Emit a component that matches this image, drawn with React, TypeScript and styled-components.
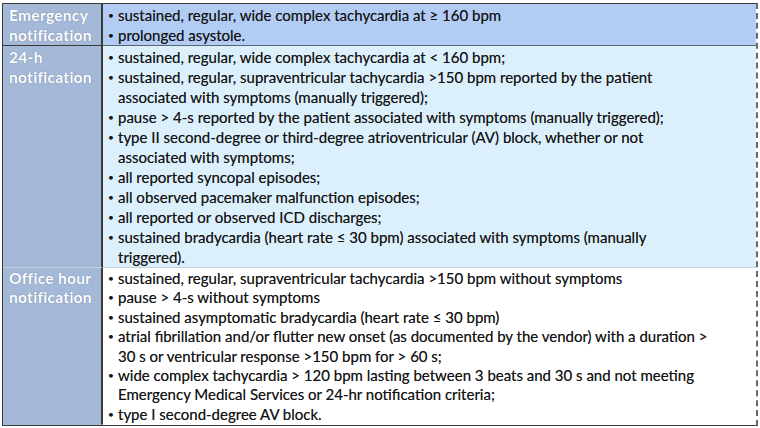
import React from "react";
import styled, { createGlobalStyle } from "styled-components";

const GlobalStyle = createGlobalStyle`
  html, body {
    margin: 0;
    padding: 0;
    background: #ffffff;
  }
  body {
    font-family: Lato, "Open Sans", "Liberation Sans", sans-serif;
    color: #141414;
  }
`;

const Page = styled.div`
  width: 760px;
  height: 428px;
  padding: 3px 2px 0 2px;
  box-sizing: border-box;
`;

const Table = styled.div`
  display: grid;
  grid-template-columns: 100px 1fr;
  border-top: 1px solid #3c3c3c;
  border-left: 1px solid #3c3c3c;
  border-right: 2px dashed #6a6a6a;
  border-bottom: 1px solid #3c3c3c;
`;

type Tone = "emergency" | "daily" | "office";

const bodyBg: Record<Tone, string> = {
  emergency: "#b2ccf4",
  daily: "#dcf0fc",
  office: "#ffffff",
};

const HeadCell = styled.div<{ $divider: string; $leading: number }>`
  background: #a4b8d8;
  color: #ffffff;
  font-weight: 700;
  font-size: 15.5px;
  line-height: ${(p) => p.$leading}px;
  padding: 1px 0 0 6px;
  border-right: 2px solid #3a3a3a;
  border-bottom: 1px solid ${(p) => p.$divider};
  text-shadow: 0 0 1px rgba(60, 80, 110, 0.7);
  letter-spacing: 0.3px;
`;

const BodyCell = styled.ul<{ $tone: Tone; $divider: string; $leading: number }>`
  margin: 0;
  list-style: none;
  background: ${(p) => bodyBg[p.$tone]};
  font-size: 15px;
  line-height: ${(p) => p.$leading}px;
  padding: 1px 0 0 4px;
  border-bottom: 1px solid ${(p) => p.$divider};
  text-shadow: 0 0 0.5px rgba(20, 20, 20, 0.6);
`;

const Item = styled.li`
  position: relative;
  padding-left: 11px;
  white-space: nowrap;

  &::before {
    content: "•";
    position: absolute;
    left: 1px;
    top: 0;
    font-size: 10px;
  }
`;

const Line = styled.span`
  display: block;
`;

type Row = {
  tone: Tone;
  head: string[];
  divider: string;
  headDivider: string;
  leading: number;
  items: string[][];
};

const rows: Row[] = [
  {
    tone: "emergency",
    head: ["Emergency", "notification"],
    divider: "#5d6470",
    headDivider: "#3a3a3a",
    leading: 20,
    items: [
      ["sustained, regular, wide complex tachycardia at ≥ 160 bpm"],
      ["prolonged asystole."],
    ],
  },
  {
    tone: "daily",
    head: ["24-h", "notification"],
    divider: "#c3d3e3",
    headDivider: "#c6d0de",
    leading: 20,
    items: [
      ["sustained, regular, wide complex tachycardia at < 160 bpm;"],
      [
        "sustained, regular, supraventricular tachycardia >150 bpm reported by the patient",
        "associated with symptoms (manually triggered);",
      ],
      ["pause > 4-s reported by the patient associated with symptoms (manually triggered);"],
      [
        "type II second-degree or third-degree atrioventricular (AV) block, whether or not",
        "associated with symptoms;",
      ],
      ["all reported syncopal episodes;"],
      ["all observed pacemaker malfunction episodes;"],
      ["all reported or observed ICD discharges;"],
      [
        "sustained bradycardia (heart rate ≤ 30 bpm) associated with symptoms (manually",
        "triggered).",
      ],
    ],
  },
  {
    tone: "office",
    head: ["Office hour", "notification"],
    divider: "transparent",
    headDivider: "transparent",
    leading: 19.4,
    items: [
      ["sustained, regular, supraventricular tachycardia >150 bpm without symptoms"],
      ["pause > 4-s without symptoms"],
      ["sustained asymptomatic bradycardia (heart rate ≤ 30 bpm)"],
      [
        "atrial fibrillation and/or flutter new onset (as documented by the vendor) with a duration >",
        "30 s or ventricular response >150 bpm for > 60 s;",
      ],
      [
        "wide complex tachycardia > 120 bpm lasting between 3 beats and 30 s and not meeting",
        "Emergency Medical Services or 24-hr notification criteria;",
      ],
      ["type I second-degree AV block."],
    ],
  },
];

export default function App() {
  return (
    <>
      <GlobalStyle />
      <Page>
        <Table>
          {rows.map((row) => (
            <React.Fragment key={row.tone}>
              <HeadCell $divider={row.headDivider} $leading={row.leading}>
                {row.head.map((h) => (
                  <Line key={h}>{h}</Line>
                ))}
              </HeadCell>
              <BodyCell $tone={row.tone} $divider={row.divider} $leading={row.leading}>
                {row.items.map((lines) => (
                  <Item key={lines[0]}>
                    {lines.map((l) => (
                      <Line key={l}>{l}</Line>
                    ))}
                  </Item>
                ))}
              </BodyCell>
            </React.Fragment>
          ))}
        </Table>
      </Page>
    </>
  );
}
